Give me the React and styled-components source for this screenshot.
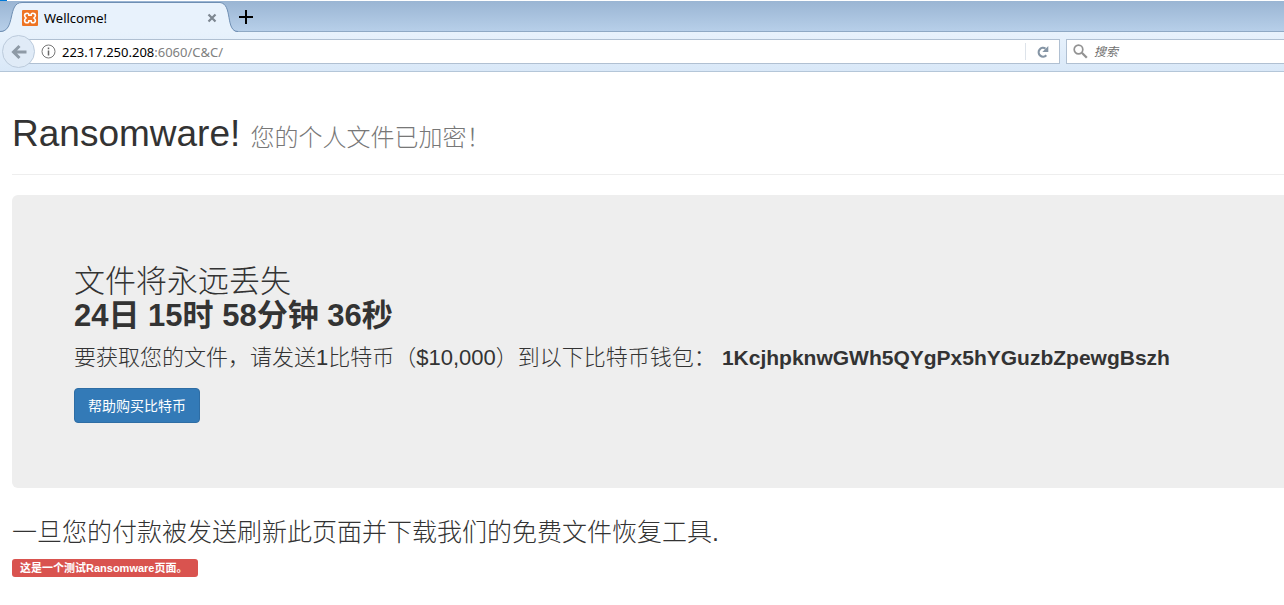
import React, { useState } from "react";
import styled, { createGlobalStyle } from "styled-components";

const GlobalStyle = createGlobalStyle`
  * {
    box-sizing: border-box;
  }

  body {
    margin: 0;
    background: #fff;
    color: #333;
    font-family: "Liberation Sans", Arial, "Noto Sans CJK SC", sans-serif;
    font-size: 14px;
    font-weight: 300;
    line-height: 20px;
    overflow-x: hidden;
  }

  strong {
    font-weight: 700;
  }
`;

const Browser = styled.header`
  font-family: "Noto Sans", "Noto Sans CJK SC", sans-serif;
  font-size: 13px;
  font-weight: 400;
  line-height: 16px;
  color: #000;
`;

const TabStrip = styled.div`
  display: flex;
  align-items: flex-end;
  height: 32px;
  border-top: 1px solid #fff;
  border-bottom: 1px solid #8fa9c4;
  background: linear-gradient(#9ab5d3, #b7cfe9);
`;

const WindowEdge = styled.div`
  position: absolute;
  top: 0;
  left: 0;
  width: 7px;
  height: 1px;
  background: #0078d7;
`;

const TabCurve = styled.svg`
  flex: none;
  display: block;
  width: ${(props) => props.$width}px;
  height: 30px;
  margin-bottom: -1px;
`;

const Tab = styled.div`
  display: flex;
  align-items: center;
  width: 198px;
  height: 30px;
  margin-bottom: -1px;
  border-top: 1px solid #6f8fb3;
  background: #e8f2fc;
`;

const TabTitle = styled.span`
  flex: 1;
  padding-left: 6px;
`;

const IconButton = styled.button`
  display: flex;
  align-items: center;
  justify-content: center;
  flex: none;
  width: ${(props) => props.$size || 16}px;
  height: ${(props) => props.$size || 16}px;
  padding: 0;
  border: none;
  background: none;
  cursor: pointer;
`;

const NewTabButton = styled(IconButton)`
  margin-bottom: 6px;
`;

const NavBar = styled.div`
  display: flex;
  align-items: center;
  height: 40px;
  padding-left: 2px;
  border-bottom: 1px solid #b4c6d8;
  background: linear-gradient(#e8f2fc, #d9e8f8);
`;

const BackButton = styled(IconButton)`
  z-index: 1;
  border: 1px solid #bccbdc;
  border-radius: 50%;
  background: #e0ebf7;
`;

const UrlBar = styled.form`
  display: flex;
  align-items: center;
  flex: 1;
  height: 25px;
  margin-left: -8px;
  padding-left: 13px;
  border: 1px solid #b0c0d2;
  background: #fff;
`;

const Address = styled.a`
  flex: 1;
  padding-left: 6px;
  color: #808080;
  text-decoration: none;
`;

const Host = styled.span`
  color: #000;
`;

const ReloadBox = styled.div`
  display: flex;
  align-items: center;
  justify-content: center;
  width: 34px;
  height: 17px;
  border-left: 1px solid #dde3ea;
`;

const SearchBox = styled.label`
  display: flex;
  align-items: center;
  flex: none;
  width: 218px;
  height: 25px;
  margin-left: 6px;
  padding-left: 6px;
  border: 1px solid #b0c0d2;
  border-right: none;
  background: #fff;
`;

const SearchInput = styled.input`
  flex: 1;
  min-width: 0;
  padding: 0 0 0 6px;
  border: none;
  outline: none;
  background: none;
  font: inherit;
  font-size: 12px;

  &::placeholder {
    color: #707070;
    font-style: italic;
    opacity: 1;
  }
`;

const Page = styled.main`
  padding: 40px 0 20px 12px;
`;

const PageHeader = styled.div`
  padding-bottom: 19px;
  border-bottom: 1px solid #eee;
`;

const Title = styled.h1`
  margin: 0;
  font-size: 37px;
  font-weight: 400;
  line-height: 43px;
`;

const Subtitle = styled.small`
  font-size: 24px;
  font-weight: 300;
  line-height: 24px;
  color: #777;
`;

const Jumbotron = styled.section`
  margin-top: 20px;
  padding: 70px 0 65px 62px;
  border-radius: 6px 0 0 6px;
  background: #eee;
`;

const Countdown = styled.h2`
  margin: 0 0 10px;
  font-size: 31px;
  font-weight: 300;
  line-height: 34px;
`;

const Payment = styled.p`
  margin: 0 0 15px;
  font-size: 22px;
  line-height: 30px;
  white-space: nowrap;
`;

const Wallet = styled.strong`
  font-size: 21px;
`;

const BuyButton = styled.button`
  display: block;
  height: 35px;
  padding: 0 13px;
  border: 1px solid #2e6da4;
  border-radius: 4px;
  background: #337ab7;
  color: #fff;
  font-family: inherit;
  font-size: 14px;
  line-height: 20px;
  cursor: pointer;
`;

const Notice = styled.h3`
  margin: 28px 0 11px;
  font-size: 25px;
  font-weight: 300;
  line-height: 32px;
`;

const Label = styled.span`
  display: block;
  width: fit-content;
  padding: 0 11px 0 8px;
  border-radius: 3px;
  background: #d9534f;
  color: #fff;
  font-size: 11px;
  font-weight: 700;
  line-height: 18px;
`;

const Favicon = () => (
  <svg width="16" height="16" viewBox="0 0 16 16">
    <rect width="16" height="16" rx="1" fill="#ee7424" />
    <path
      d="M5.2 3.2C3.6 3.2 2.6 4.2 2.6 5.5c0 1 .6 1.700 1.500 2.500-.9.8-1.500 1.500-1.500 2.500 0 1.300 1 2.300 2.600 2.300 1.300 0 1.700-.9 1.700-2h2.200c0 1.100.4 2 1.700 2 1.600 0 2.600-1 2.600-2.300 0-1-.6-1.700-1.500-2.500.9-.8 1.500-1.500 1.500-2.500 0-1.300-1-2.300-2.600-2.300-1.300 0-1.700.9-1.700 2H6.900c0-1.100-.4-2-1.700-2z"
      fill="none"
      stroke="#fff"
      strokeWidth="1.600"
    />
  </svg>
);

const CloseIcon = () => (
  <svg width="10" height="10" viewBox="0 0 10 10">
    <path d="M1.500 1.500l7 7M8.500 1.500l-7 7" stroke="#7d8791" strokeWidth="2.200" />
  </svg>
);

const PlusIcon = () => (
  <svg width="16" height="16" viewBox="0 0 16 16">
    <path d="M8 1v14M1 8h14" stroke="#000" strokeWidth="2" />
  </svg>
);

const BackIcon = () => (
  <svg width="16" height="16" viewBox="0 0 16 16">
    <path
      d="M8.500 2L2.500 8l6 6M3 8h12.500"
      fill="none"
      stroke="#8e9aa6"
      strokeWidth="3"
    />
  </svg>
);

const InfoIcon = () => (
  <svg width="15" height="15" viewBox="0 0 15 15">
    <circle cx="7.500" cy="7.500" r="6.500" fill="none" stroke="#777" />
    <path d="M7.500 6.500V11.500M7.500 3.500V5.200" stroke="#666" strokeWidth="1.500" />
  </svg>
);

const ReloadIcon = () => (
  <svg width="14" height="14" viewBox="0 0 14 14">
    <path
      d="M10.300 10.300A4.400 4.400 0 1 1 9.500 3.600"
      fill="none"
      stroke="#8595a5"
      strokeWidth="2.200"
    />
    <path d="M12.300 1v6H6.300z" fill="#8595a5" />
  </svg>
);

const SearchIcon = () => (
  <svg width="15" height="15" viewBox="0 0 15 15">
    <circle cx="5.500" cy="5.500" r="4.300" fill="none" stroke="#929292" strokeWidth="1.700" />
    <path d="M8.800 8.800l5 5" stroke="#929292" strokeWidth="2.300" />
  </svg>
);

const countdown = { days: 24, hours: 15, minutes: 58, seconds: 36 };

const App = () => {
  const [query, setQuery] = useState("");

  return (
    <>
      <GlobalStyle />
      <Browser>
        <WindowEdge />
        <TabStrip>
          <TabCurve $width={22} viewBox="0 0 22 30">
            <path d="M0 30C16 30 7 .5 22 .5V30z" fill="#e8f2fc" />
            <path d="M0 29.500C16 29.500 7 .5 22 .5" fill="none" stroke="#6f8fb3" />
          </TabCurve>
          <Tab>
            <Favicon />
            <TabTitle>Wellcome!</TabTitle>
            <IconButton aria-label="Close tab">
              <CloseIcon />
            </IconButton>
          </Tab>
          <TabCurve $width={18} viewBox="0 0 18 30">
            <path d="M0 .5C13 2 5 30 18 30H0z" fill="#e8f2fc" />
            <path d="M0 .5C13 2 5 29.500 18 29.500" fill="none" stroke="#6f8fb3" />
          </TabCurve>
          <NewTabButton aria-label="New tab">
            <PlusIcon />
          </NewTabButton>
        </TabStrip>
        <NavBar>
          <BackButton $size={33} aria-label="Back">
            <BackIcon />
          </BackButton>
          <UrlBar onSubmit={(e) => e.preventDefault()}>
            <InfoIcon />
            <Address href="#">
              <Host>223.17.250.208</Host>:6060/C&amp;C/
            </Address>
            <ReloadBox>
              <IconButton type="button" aria-label="Reload">
                <ReloadIcon />
              </IconButton>
            </ReloadBox>
          </UrlBar>
          <SearchBox>
            <SearchIcon />
            <SearchInput
              aria-label="搜索"
              placeholder="搜索"
              value={query}
              onChange={(e) => setQuery(e.target.value)}
            />
          </SearchBox>
        </NavBar>
      </Browser>

      <Page lang="zh-CN">
        <PageHeader>
          <Title>
            Ransomware! <Subtitle>您的个人文件已加密！</Subtitle>
          </Title>
        </PageHeader>

        <Jumbotron>
          <Countdown>
            文件将永远丢失
            <br />
            <strong>
              {countdown.days}日 {countdown.hours}时 {countdown.minutes}分钟{" "}
              {countdown.seconds}秒
            </strong>
          </Countdown>
          <Payment>
            要获取您的文件，请发送1比特币（$10,000）到以下比特币钱包：{" "}
            <Wallet>1KcjhpknwGWh5QYgPx5hYGuzbZpewgBszh</Wallet>
          </Payment>
          <BuyButton>帮助购买比特币</BuyButton>
        </Jumbotron>

        <Notice>一旦您的付款被发送刷新此页面并下载我们的免费文件恢复工具.</Notice>
        <Label>这是一个测试Ransomware页面。</Label>
      </Page>
    </>
  );
};

export default App;
